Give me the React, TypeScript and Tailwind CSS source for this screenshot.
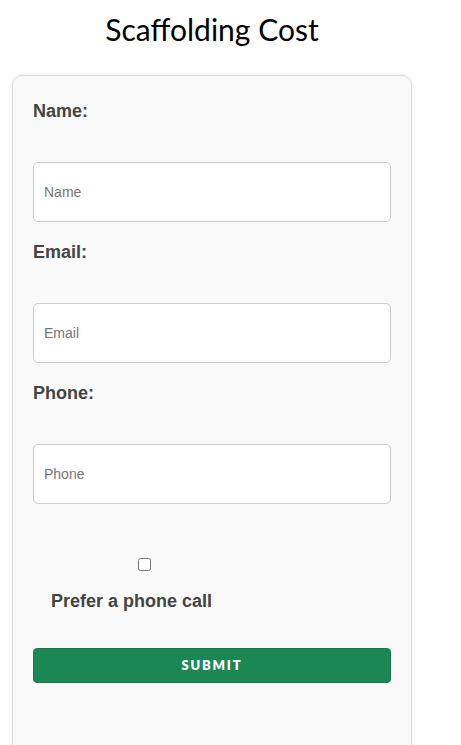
import React from 'react';

const field = (label: string, placeholder: string, type: string) => (
  <div key={label}>
    <label className="block text-[18px] font-bold leading-5 text-[#444]">{label}</label>
    <input
      type={type}
      placeholder={placeholder}
      className="mt-[41px] mb-[20px] block h-[60px] w-full rounded-[5px] border border-[#ccc] bg-white px-[10px] text-[14px] text-[#333] placeholder:text-[#757575] outline-none"
    />
  </div>
);

export default function App() {
  return (
    <div className="min-h-[745px] bg-white font-['Liberation_Sans',Arial,sans-serif]">
      <div className="ml-[12px] w-[400px]">
        <h1 className="pt-[10px] text-center font-['Lato',sans-serif] text-[30px] font-normal leading-[38px] text-black">
          Scaffolding Cost
        </h1>
        <form className="mt-[27px] min-h-[700px] rounded-[10px] border border-[#ddd] bg-[#f9f9f9] px-[20px] pt-[25px] shadow-[0_0_4px_rgba(0,0,0,0.08)]">
          {field('Name:', 'Name', 'text')}
          {field('Email:', 'Email', 'email')}
          {field('Phone:', 'Phone', 'tel')}
          <div className="flex flex-col">
            <input type="checkbox" className="ml-[105px] mt-[34px] h-[13px] w-[13px]" />
            <span className="ml-[18px] mt-[20px] text-[18px] font-bold leading-5 text-[#444]">
              Prefer a phone call
            </span>
          </div>
          <button
            type="button"
            className="mt-[37px] h-[35px] w-full rounded-[4px] border border-[#167a4b] bg-[#1a8754] font-['Lato',sans-serif] text-[13px] font-extrabold tracking-[1.8px] text-white"
          >
            SUBMIT
          </button>
        </form>
      </div>
    </div>
  );
}
